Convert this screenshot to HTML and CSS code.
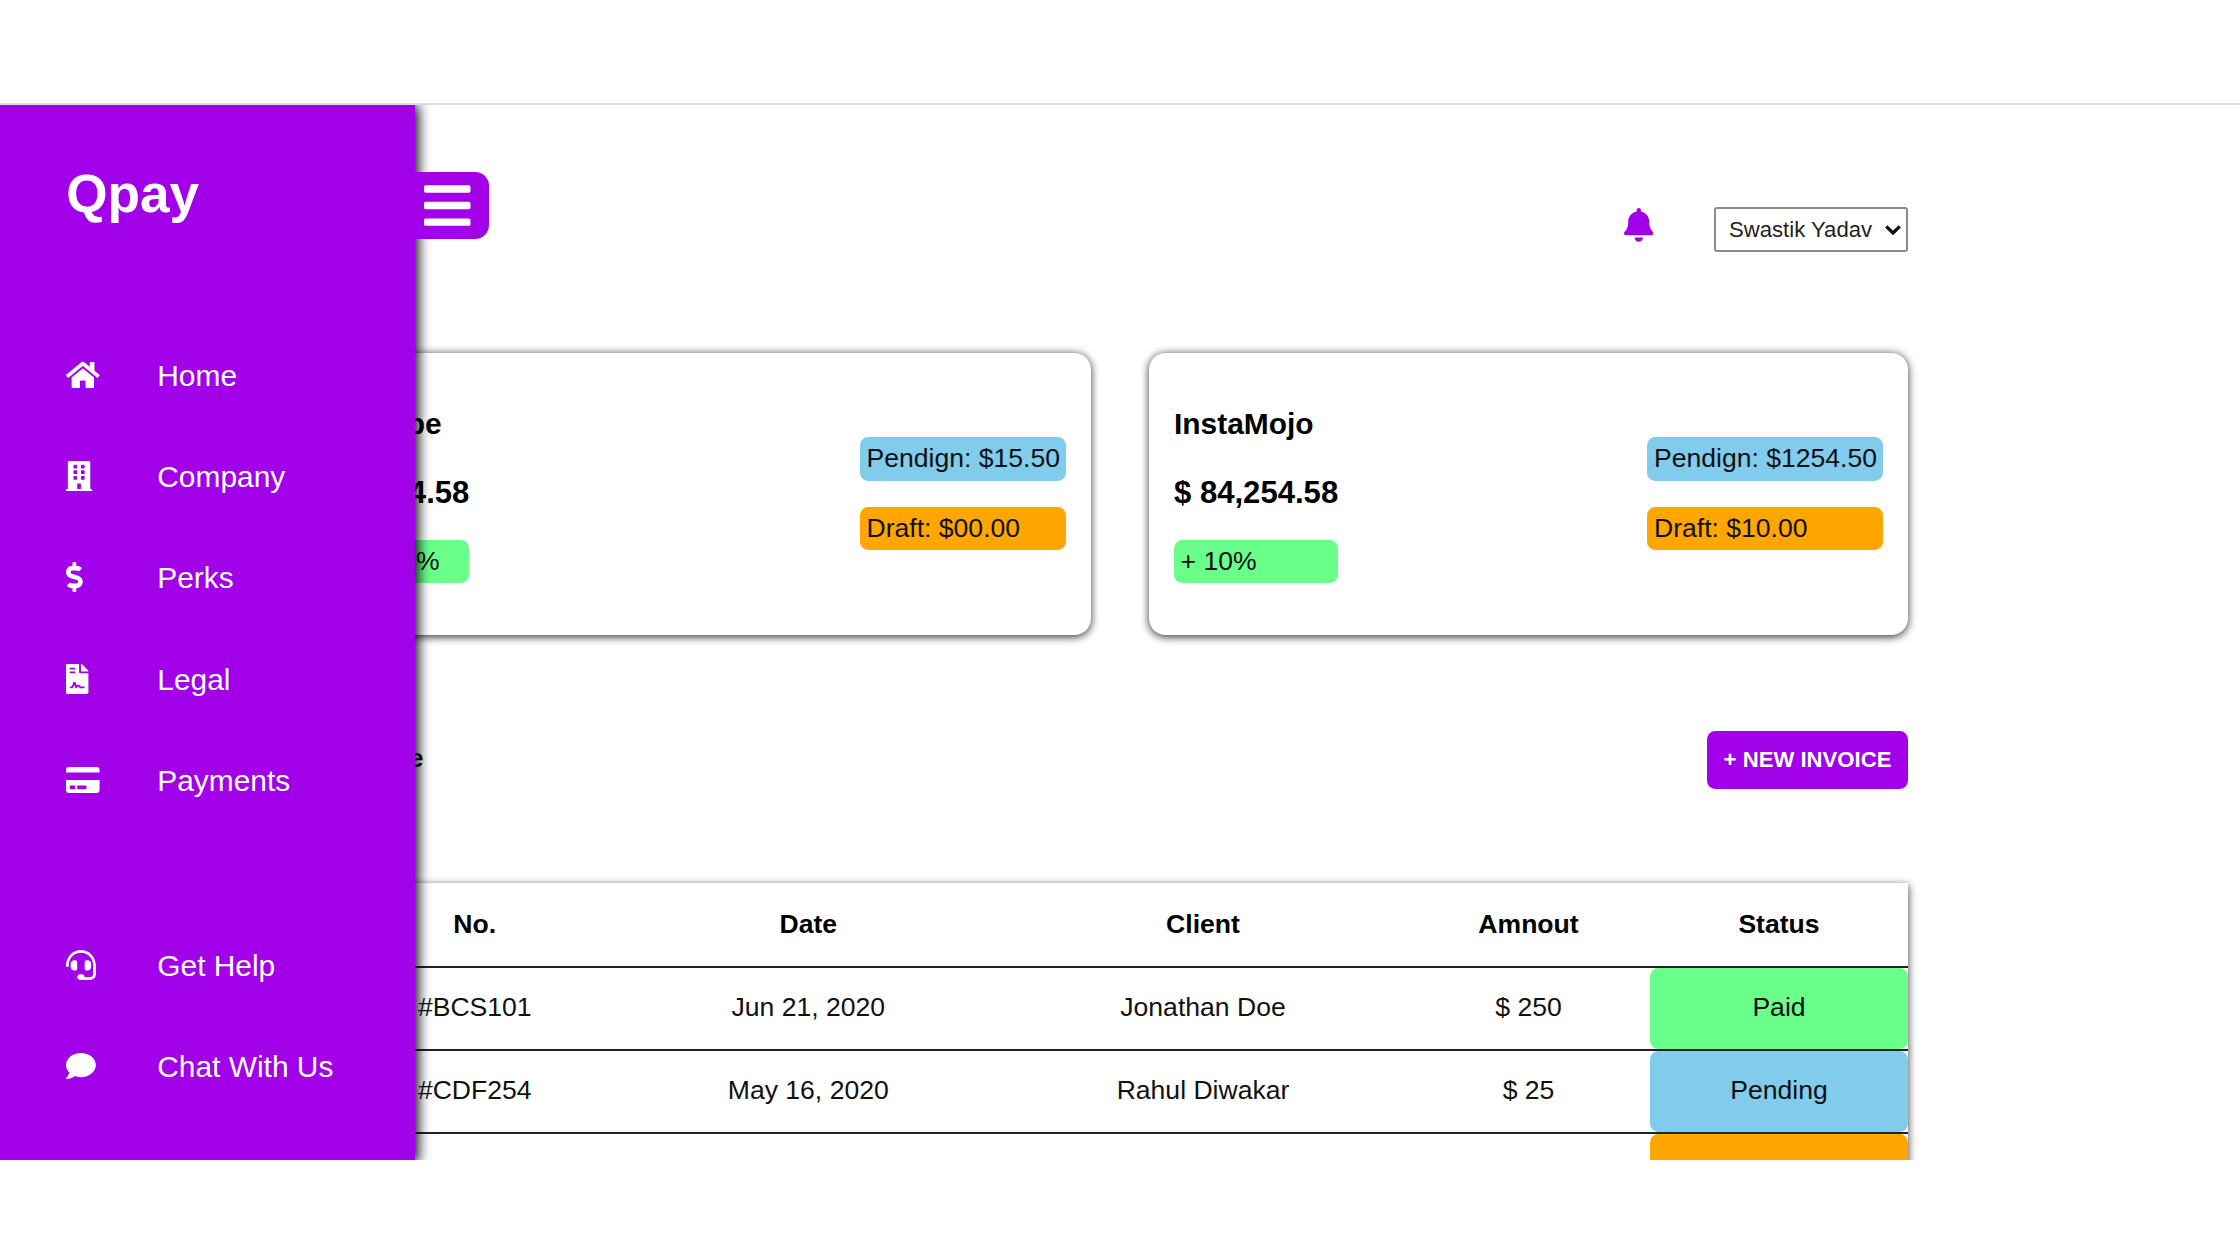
FILE: index.html
```html
<!DOCTYPE html>
<html lang="en">
<head>
<meta charset="utf-8">
<title>Qpay</title>
<link rel="stylesheet" href="styles.css">
</head>
<body>
<div class="topbar"></div>
<div class="stage">
  <main class="main">
    <header class="header">
      <svg class="bell" viewBox="0 0 448 512"><path d="M224 512c35.32 0 63.97-28.65 63.97-64H160.03c0 35.35 28.65 64 63.97 64zm215.39-149.71c-19.32-20.76-55.47-51.99-55.47-154.29 0-77.7-54.48-139.9-127.94-155.16V32c0-17.67-14.32-32-31.98-32s-31.98 14.33-31.98 32v20.84C118.56 68.1 64.08 130.3 64.08 208c0 102.3-36.15 133.53-55.47 154.29-6 6.45-8.66 14.16-8.61 21.71.11 16.4 12.98 32 32.1 32h383.8c19.12 0 32-15.6 32.1-32 .05-7.55-2.61-15.27-8.61-21.71z"/></svg>
      <div class="account">
        <select class="account-select" aria-label="Account"><option>Swastik Yadav</option></select>
        <svg class="account-arrow" viewBox="0 0 16 10"><path d="M1.2 1.4L8 8l6.8-6.6"/></svg>
      </div>
    </header>

    <section class="cards">
      <article class="card">
        <div class="card-balance">
          <h3 class="card-name">Stripe</h3>
          <p class="card-amount">$254.58</p>
          <p class="pill green">+ 10%</p>
        </div>
        <div class="card-side">
          <p class="pill blue">Pendign: $15.50</p>
          <p class="pill orange">Draft: $00.00</p>
        </div>
      </article>
      <article class="card">
        <div class="card-balance">
          <h3 class="card-name">InstaMojo</h3>
          <p class="card-amount">$ 84,254.58</p>
          <p class="pill green">+ 10%</p>
        </div>
        <div class="card-side">
          <p class="pill blue">Pendign: $1254.50</p>
          <p class="pill orange">Draft: $10.00</p>
        </div>
      </article>
    </section>

    <section class="invoice-bar">
      <h4 class="invoice-title">Invoice</h4>
      <button class="new-invoice">+ NEW INVOICE</button>
    </section>

    <section class="table">
      <div class="row head"><span>No.</span><span>Date</span><span>Client</span><span>Amnout</span><span>Status</span></div>
      <div class="row"><span>#BCS101</span><span>Jun 21, 2020</span><span>Jonathan Doe</span><span>$ 250</span><span class="status green">Paid</span></div>
      <div class="row"><span>#CDF254</span><span>May 16, 2020</span><span>Rahul Diwakar</span><span>$ 25</span><span class="status blue">Pending</span></div>
      <div class="row"><span></span><span></span><span></span><span></span><span class="status orange"></span></div>
    </section>
  </main>

  <nav class="sidebar">
    <h1 class="brand">Qpay</h1>
    <ul class="menu">
      <li class="item"><svg class="icon" viewBox="0 0 576 512"><path d="M280.37 148.26L96 300.11V464a16 16 0 0 0 16 16l112.06-.29a16 16 0 0 0 15.92-16V368a16 16 0 0 1 16-16h64a16 16 0 0 1 16 16v95.64a16 16 0 0 0 16 16.05L464 480a16 16 0 0 0 16-16V300L295.67 148.26a12.19 12.19 0 0 0-15.3 0zM571.6 251.47L488 182.56V44.05a12 12 0 0 0-12-12h-56a12 12 0 0 0-12 12v72.61L318.47 43a48 48 0 0 0-61 0L4.34 251.47a12 12 0 0 0-1.6 16.9l25.5 31A12 12 0 0 0 45.15 301l235.22-193.74a12.19 12.19 0 0 1 15.3 0L530.9 301a12 12 0 0 0 16.9-1.6l25.5-31a12 12 0 0 0-1.7-16.93z"/></svg><span>Home</span></li>
      <li class="item"><svg class="icon" viewBox="0 0 576 512"><path d="M436 480h-20V24c0-13.255-10.745-24-24-24H56C42.745 0 32 10.745 32 24v456H12c-6.627 0-12 5.373-12 12v20h448v-20c0-6.627-5.373-12-12-12zM128 76c0-6.627 5.373-12 12-12h40c6.627 0 12 5.373 12 12v40c0 6.627-5.373 12-12 12h-40c-6.627 0-12-5.373-12-12V76zm0 96c0-6.627 5.373-12 12-12h40c6.627 0 12 5.373 12 12v40c0 6.627-5.373 12-12 12h-40c-6.627 0-12-5.373-12-12v-40zm52 148h-40c-6.627 0-12-5.373-12-12v-40c0-6.627 5.373-12 12-12h40c6.627 0 12 5.373 12 12v40c0 6.627-5.373 12-12 12zm76 160h-64v-84c0-6.627 5.373-12 12-12h40c6.627 0 12 5.373 12 12v84zm64-172c0 6.627-5.373 12-12 12h-40c-6.627 0-12-5.373-12-12v-40c0-6.627 5.373-12 12-12h40c6.627 0 12 5.373 12 12v40zm0-96c0 6.627-5.373 12-12 12h-40c-6.627 0-12-5.373-12-12v-40c0-6.627 5.373-12 12-12h40c6.627 0 12 5.373 12 12v40zm0-96c0 6.627-5.373 12-12 12h-40c-6.627 0-12-5.373-12-12V76c0-6.627 5.373-12 12-12h40c6.627 0 12 5.373 12 12v40z"/></svg><span>Company</span></li>
      <li class="item"><svg class="icon" viewBox="0 0 576 512"><path d="M209.2 233.4l-108-31.6C88.7 198.2 80 186.5 80 173.5c0-16.3 13.2-29.5 29.5-29.5h66.3c12.2 0 24.2 3.7 34.2 10.5 6.1 4.1 14.3 3.1 19.5-2l34.8-34c7.1-6.9 6.1-18.4-1.8-24.5C238 74.8 207.4 64.1 176 64V16c0-8.8-7.2-16-16-16h-32c-8.8 0-16 7.2-16 16v48h-2.5C45.8 64-5.4 118.7.5 183.6c4.2 46.1 39.4 83.6 83.8 96.6l102.5 30c12.5 3.7 21.2 15.3 21.2 28.3 0 16.3-13.2 29.5-29.5 29.5h-66.3C100 368 88 364.3 78 357.5c-6.1-4.1-14.3-3.1-19.5 2l-34.8 34c-7.1 6.9-6.1 18.4 1.8 24.5 24.5 19.2 55.1 29.9 86.5 30v48c0 8.8 7.2 16 16 16h32c8.8 0 16-7.2 16-16v-48.2c46.6-.9 90.3-28.6 105.7-72.7 21.5-61.6-14.6-124.8-72.5-141.7z"/></svg><span>Perks</span></li>
      <li class="item"><svg class="icon" viewBox="0 0 576 512"><path d="M224 136V0H24C10.7 0 0 10.7 0 24v464c0 13.3 10.7 24 24 24h336c13.3 0 24-10.7 24-24V160H248c-13.2 0-24-10.8-24-24zM64 72c0-4.42 3.58-8 8-8h80c4.42 0 8 3.58 8 8v16c0 4.42-3.58 8-8 8H72c-4.42 0-8-3.58-8-8V72zm0 64c0-4.42 3.58-8 8-8h80c4.42 0 8 3.58 8 8v16c0 4.42-3.58 8-8 8H72c-4.42 0-8-3.58-8-8v-16zm192.81 248H304c8.84 0 16 7.16 16 16s-7.16 16-16 16h-47.19c-16.45 0-31.27-9.14-38.64-23.86-2.95-5.92-8.09-6.52-10.17-6.52s-7.22.59-10.02 6.19l-7.67 15.34a15.986 15.986 0 0 1-14.31 8.84c-.38 0-.75-.02-1.14-.05-6.45-.45-12-4.75-14.03-10.89L144 354.59l-10.61 31.88c-5.89 17.66-22.38 29.53-41 29.53H80c-8.84 0-16-7.16-16-16s7.16-16 16-16h12.39c4.83 0 9.11-3.08 10.64-7.66l18.19-54.64c3.3-9.81 12.44-16.41 22.78-16.41s19.48 6.59 22.77 16.41l13.88 41.64c19.77-16.19 54.05-9.7 66 14.16 2.02 4.06 5.96 6.5 10.16 6.5zM377 105L279.1 7c-4.5-4.5-10.6-7-17-7H256v128h128v-6.1c0-6.3-2.5-12.4-7-16.9z"/></svg><span>Legal</span></li>
      <li class="item"><svg class="icon" viewBox="0 0 576 512"><path d="M0 432c0 26.5 21.5 48 48 48h480c26.5 0 48-21.5 48-48V256H0v176zm192-68c0-6.6 5.4-12 12-12h136c6.6 0 12 5.4 12 12v40c0 6.6-5.4 12-12 12H204c-6.6 0-12-5.4-12-12v-40zm-128 0c0-6.6 5.4-12 12-12h72c6.6 0 12 5.4 12 12v40c0 6.6-5.4 12-12 12H76c-6.6 0-12-5.4-12-12v-40zM576 80v48H0V80c0-26.5 21.5-48 48-48h480c26.5 0 48 21.5 48 48z"/></svg><span>Payments</span></li>
    </ul>
    <ul class="menu support">
      <li class="item"><svg class="icon" viewBox="0 0 576 512"><path d="M192 208c0-17.67-14.33-32-32-32h-16c-35.35 0-64 28.65-64 64v48c0 35.35 28.65 64 64 64h16c17.67 0 32-14.33 32-32V208zm176 144c35.35 0 64-28.65 64-64v-48c0-35.35-28.65-64-64-64h-16c-17.67 0-32 14.33-32 32v112c0 17.67 14.33 32 32 32h16zM256 0C113.18 0 4.58 118.83 0 256v16c0 8.84 7.16 16 16 16h16c8.84 0 16-7.16 16-16v-16c0-114.69 93.31-208 208-208s208 93.31 208 208h-.12c.08 2.43.12 165.72.12 165.72 0 23.35-18.93 42.28-42.28 42.28H320c0-26.51-21.49-48-48-48h-32c-26.51 0-48 21.49-48 48s21.49 48 48 48h181.72c49.86 0 90.28-40.42 90.28-90.28V256C507.42 118.83 398.82 0 256 0z"/></svg><span>Get Help</span></li>
      <li class="item"><svg class="icon" viewBox="0 0 576 512"><path d="M256 32C114.6 32 0 125.1 0 240c0 49.6 21.4 95 57 130.7C44.5 421.1 2.7 466 2.2 466.5c-2.2 2.3-2.8 5.7-1.5 8.7S4.8 480 8 480c66.3 0 116-31.8 140.6-51.4 32.7 12.3 69 19.4 107.4 19.4 141.4 0 256-93.1 256-208S397.4 32 256 32z"/></svg><span>Chat With Us</span></li>
    </ul>
    <button class="toggle" aria-label="Menu"><svg class="bars" viewBox="0 0 448 512"><path d="M16 132h416c8.837 0 16-7.163 16-16V76c0-8.837-7.163-16-16-16H16C7.163 60 0 67.163 0 76v40c0 8.837 7.163 16 16 16zm0 160h416c8.837 0 16-7.163 16-16v-40c0-8.837-7.163-16-16-16H16c-8.837 0-16 7.163-16 16v40c0 8.837 7.163 16 16 16zm0 160h416c8.837 0 16-7.163 16-16v-40c0-8.837-7.163-16-16-16H16c-8.837 0-16 7.163-16 16v40c0 8.837 7.163 16 16 16z"/></svg></button>
  </nav>
</div>
</body>
</html>
```
FILE: styles.css
```css
* { box-sizing: border-box; margin: 0; padding: 0; }

body {
  height: 1260px;
  overflow: hidden;
  background: #fff;
  color: #111;
  font-family: "Liberation Sans", Arial, sans-serif;
  font-size: 26.57px;
}

.topbar { height: 104.5px; border-bottom: 2px solid #dcdcde; }

.stage { position: relative; height: 1055.5px; overflow: hidden; }

.main { width: 1908px; padding: 102.5px 0 0 332px; }

.green { background: #6aff8a; }
.blue { background: #81cbec; }
.orange { background: #ffa700; }

/* header */
.header { display: flex; justify-content: flex-end; align-items: flex-start; height: 45px; }
.bell { width: 29.5px; height: 33.7px; margin: 1px 61px 0 0; fill: #a100e8; }
.account { display: grid; align-items: center; width: 194px; height: 45px; }
.account-select {
  grid-area: 1 / 1;
  width: 194px;
  height: 45px;
  padding: 0 0 0 13px;
  appearance: none;
  border: 2px solid #8a8a8a;
  border-radius: 3px;
  background: #fff;
  color: #222;
  font: 22.14px "Liberation Sans", Arial, sans-serif;
}
.account-arrow {
  grid-area: 1 / 1;
  justify-self: end;
  width: 16px;
  height: 10px;
  margin-right: 7px;
  fill: none;
  stroke: #111;
  stroke-width: 3.3;
  z-index: 1;
}

/* balance cards */
.cards { display: grid; grid-template-columns: 1fr 1fr; gap: 58px; margin-top: 101px; }
.card {
  display: flex;
  justify-content: space-between;
  height: 281.6px;
  padding: 0 25px;
  border-radius: 16.6px;
  background: #fff;
  box-shadow: 0 1.7px 8.3px rgba(0, 0, 0, 0.8);
}
.card-balance { padding-top: 54px; }
.card-name { font-size: 29.9px; line-height: 34px; }
.card-amount { margin: 33.5px 0 30.5px; font-size: 31.09px; line-height: 35px; font-weight: bold; }
.card-name, .card-amount { color: #000; }
.pill { height: 43.3px; padding: 6px 6.6px; border-radius: 8.3px; line-height: 30px; white-space: nowrap; }
.card-side { display: flex; flex-direction: column; justify-content: center; gap: 26.5px; }
.card-side .pill { padding-right: 6px; }

/* invoice heading */
.invoice-bar { display: flex; justify-content: space-between; align-items: center; height: 58px; margin-top: 96.4px; }
.invoice-title { margin-top: -2px; font-size: 26.57px; }
.new-invoice {
  width: 201px;
  height: 58px;
  border: 0;
  border-radius: 8.3px;
  background: #a100e8;
  color: #fff;
  font: bold 22.14px "Liberation Sans", Arial, sans-serif;
  white-space: nowrap;
}

/* invoice table */
.table { margin-top: 94px; background: #fff; box-shadow: 0 1.7px 8.3px rgba(0, 0, 0, 0.8); }
.row {
  display: grid;
  grid-template-columns: 285.5px 381.5px 408px 243px 258px;
  height: 83px;
  border-bottom: 2px solid #222;
  line-height: 79px;
  text-align: center;
}
.head { height: 85px; color: #000; font-weight: bold; line-height: 83px; }
.status { border-radius: 8.3px; }

/* sidebar */
.sidebar {
  position: absolute;
  top: 0;
  left: 0;
  width: 414.7px;
  height: 1055.5px;
  padding: 59.5px 0 0 66.3px;
  background: #a100e8;
  color: #fff;
  box-shadow: 1.7px 1.7px 12px 1.7px #000;
}
.brand { height: 59px; font-size: 53.14px; line-height: 59px; }
.menu { margin-top: 102.2px; list-style: none; }
.support { margin-top: 83.600px; }
.item { display: flex; align-items: center; height: 101.3px; font-size: 29.9px; }
.icon { width: 33.6px; height: 29.9px; margin: -2px 57.4px 0 0; fill: #fff; }

.toggle {
  position: absolute;
  top: 67.5px;
  left: 414.700px;
  display: flex;
  align-items: center;
  width: 74.6px;
  height: 66.5px;
  padding-left: 9.6px;
  border: 0;
  border-radius: 0 14px 14px 0;
  background: #a100e8;
}
.bars { width: 46.5px; height: 53.1px; fill: #fff; }
```
